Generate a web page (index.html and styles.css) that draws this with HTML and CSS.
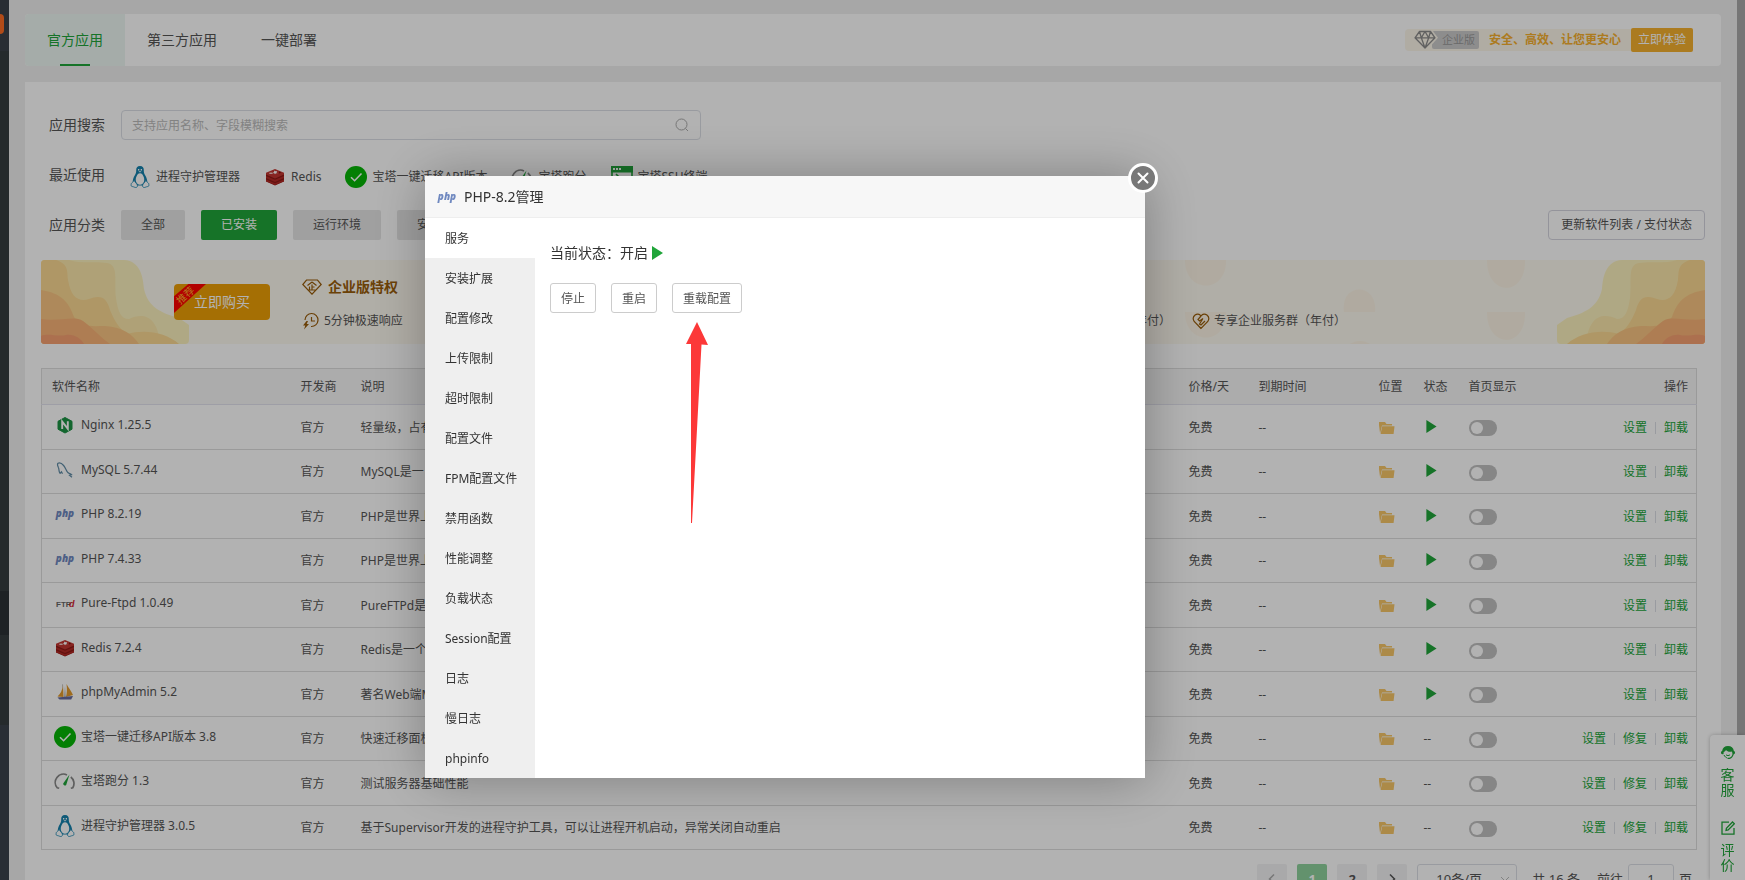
FILE: index.html
```html
<!DOCTYPE html>
<html lang="zh-CN">
<head>
<meta charset="utf-8">
<title>软件商店</title>
<link rel="stylesheet" href="styles.css">
</head>
<body>
<svg class="sprite" aria-hidden="true">
  <symbol id="i-tux" viewBox="0 0 22 22">
    <path fill="#1581ad" d="M11 0C8.200 0 7.100 1.800 7.200 4.200c.1 2.500-.4 3.200-1.500 5.200-1 1.700-1.800 3.900-2 6.100l3 4h8.600l3-4c-.2-2.200-1-4.400-2-6.100-1.100-2-1.600-2.700-1.500-5.200C14.900 1.800 13.800 0 11 0z"/>
    <path fill="#fff" d="M11 7.200c-1.700 0-2.600 1.200-3.400 3-.8 1.800-1.100 3.400-.6 5.400.5 2 2 3.200 4 3.200s3.500-1.200 4-3.200c.5-2 .2-3.600-.6-5.400-.8-1.800-1.700-3-3.400-3z"/>
    <path fill="#fff" stroke="#1581ad" stroke-width=".8" d="M5.200 14.600c-1 .3-1.200 1.800-2.600 2.600-.8.500-.3 1.300-.5 2.200-.2 1.300 2 1 3.700 1.900 1.300.6 2.700-.1 2.700-1.500 0-1.300-2-3.300-3.300-5.200zM16.800 14.600c1 .3 1.200 1.800 2.600 2.600.8.500.3 1.300.5 2.200.2 1.300-2 1-3.700 1.900-1.300.6-2.700-.1-2.700-1.500 0-1.300 2-3.300 3.300-5.200z"/>
    <path fill="#fff" d="M9 3h1.300v1.400H9zM11.700 3H13v1.400h-1.300zM9.500 5.200h3L11 6.400z"/>
  </symbol>
  <symbol id="i-redis" viewBox="0 0 22 22">
    <path fill="#8f1a16" d="M2 7l9 4.500L20 7v8.500l-9 4-9-4z"/>
    <path fill="#b52a26" d="M2 13.500l9 3.800 9-3.800v1.700l-9 3.900-9-3.900zM2 10l9 3.800L20 10v2l-9 3.900L2 12z"/>
    <path fill="#c23631" d="M11 3l9 3.700v1.900l-9 3.900-9-3.900V6.700z"/>
    <path fill="#fff" d="M10.500 4.400l1 .9 1.700-.2-.8 1.200 1.200.9-1.700.1-.9 1-.7-1.100-1.700-.1 1.200-.8z"/>
    <ellipse cx="7" cy="7.200" rx="2" ry=".8" fill="#f3d5d3"/>
    <path fill="#7a1410" d="M15 5.600l2.300 1-2.300 1z"/>
  </symbol>
  <symbol id="i-check" viewBox="0 0 22 22">
    <circle cx="11" cy="11" r="11" fill="#06b606"/>
    <path fill="none" stroke="#fff" stroke-width="1.600" d="M6 11.200l3.600 3.500L16.500 7.500"/>
  </symbol>
  <symbol id="i-gauge" viewBox="0 0 22 22">
    <path fill="none" stroke="#888" stroke-width="1.700" d="M5.200 18.300l-2-.5A8.300 8.300 0 0 1 13 4.900M16.800 7A8.300 8.300 0 0 1 18.800 17.800l-2 .5"/>
    <path fill="#20a53a" d="M15.500 4.500L12.200 15a1.800 1.800 0 0 1-3-1.600z"/>
  </symbol>
  <symbol id="i-term" viewBox="0 0 22 22">
    <rect x="1" y="1" width="20" height="20" fill="#fff" stroke="#20a53a" stroke-width="1.600"/>
    <path fill="#20a53a" d="M0 0h22v6.500H0z"/>
    <path fill="#fff" d="M2 2h2v2H2zM5 2h2v2H5zM8 2h2v2H8z"/>
    <path fill="none" stroke="#20a53a" stroke-width="1.500" d="M5 8l3 3-3 3"/>
  </symbol>
  <symbol id="i-nginx" viewBox="0 0 22 22">
    <path fill="#1c9344" stroke="#1c9344" stroke-linejoin="round" d="M11 3.500l7 3.800v7.900l-7 3.800-7-3.800V7.300z"/>
    <path fill="none" stroke="#fff" stroke-width="1.900" d="M8.200 15V7.600l5.600 7.200V7.300"/>
  </symbol>
  <symbol id="i-mysql" viewBox="0 0 22 22">
    <path fill="none" stroke="#5f8ba5" stroke-width="1.200" d="M6 14.500c-1.500-2-.6-4-1.600-6C3.600 6.800 3 5 4 4.200c2-.8 4 .4 5.600 2.300 2 2.400 2.600 5 4.200 7 1 1 2.600 1.200 3.700 2.200l-2 .6 2.500 2M6 14.500l1.500-1.700 1 2"/>
  </symbol>
  <symbol id="i-php" viewBox="0 0 22 22">
    <text class="logo-php" x="11" y="14" text-anchor="middle">php</text>
  </symbol>
  <symbol id="i-ftp" viewBox="0 0 22 22">
    <text class="logo-ftp" x="2" y="15">FTP</text><text class="logo-ftpd" x="15" y="15">d</text>
  </symbol>
  <symbol id="i-pma" viewBox="0 0 22 22">
    <path fill="#e29a2b" d="M9 3.500C8.500 9 6.500 13 3.500 15.500L9.500 16zM12.500 3c2 3.500 4.500 7 6.500 11l-7 2c1-4 1.200-8 .5-13z"/>
    <path fill="#bcbcbc" d="M8 3l1 .7-.5 5zM11 5l.8 11H10z"/>
    <path fill="#676a9c" d="M3.500 16.500l15.500-1.500-1.800 3.500H5.500z"/>
  </symbol>
  <symbol id="i-folder" viewBox="0 0 16 14">
    <path fill="#f6c667" d="M0 1h6l1.500 2H13v1.600H3L1.200 12H1L0 4z"/>
    <path fill="#f6c667" d="M3.200 5.300H15.500L14.600 13H1.600z"/>
  </symbol>
  <symbol id="i-play" viewBox="0 0 12 14"><path fill="#20a53a" d="M1 0l11 7-11 7z"/></symbol>
</svg>

<div class="app">
  <aside class="side">
    <div class="side-top"><span class="side-badge"></span></div>
    <div class="side-menu"></div>
    <div class="side-current"></div>
    <div class="side-menu-end"></div>
    <div class="side-bottom"></div>
  </aside>

  <main class="main">
    <header class="tabs">
      <nav class="tab-list">
        <a class="tab tab-on" href="#">官方应用</a>
        <a class="tab" href="#">第三方应用</a>
        <a class="tab" href="#">一键部署</a>
      </nav>
      <div class="promo">
        <svg class="promo-gem" viewBox="0 0 24 20" aria-hidden="true"><path fill="#fcf6ea" d="M4 0h14l6 7.800L13 20H11L0 7.800z"/><path fill="none" stroke="#8c8c8c" stroke-width="1.300" stroke-linejoin="round" d="M5.500 1.500h11L21 7.800 11 18 1 7.800zM1 7.800h20M5.500 1.500l1.800 6.300L11 18l3.700-10.200 1.800-6.300M7.300 7.800L11 1.500l3.700 6.300"/></svg>
        <span class="promo-tag">企业版</span>
        <strong class="promo-text">安全、高效、让您更安心</strong>
        <button class="promo-btn" type="button">立即体验</button>
      </div>
    </header>

    <section class="panel">
      <div class="filter">
        <label class="filter-label" for="q">应用搜索</label>
        <div class="search">
          <input class="search-input" id="q" type="text" placeholder="支持应用名称、字段模糊搜索">
          <svg class="search-icon" viewBox="0 0 14 14" aria-hidden="true"><circle cx="6.500" cy="6.500" r="5.500" fill="none" stroke="#aaa"/><path stroke="#aaa" d="M10.500 10.500L13 13"/></svg>
        </div>
      </div>
      <div class="filter">
        <span class="filter-label">最近使用</span>
        <div class="recent">
          <a class="recent-item" href="#"><svg class="ico"><use href="#i-tux"/></svg>进程守护管理器</a>
          <a class="recent-item" href="#"><svg class="ico"><use href="#i-redis"/></svg>Redis</a>
          <a class="recent-item" href="#"><svg class="ico"><use href="#i-check"/></svg>宝塔一键迁移API版本</a>
          <a class="recent-item" href="#"><svg class="ico"><use href="#i-gauge"/></svg>宝塔跑分</a>
          <a class="recent-item" href="#"><svg class="ico"><use href="#i-term"/></svg>宝塔SSH终端</a>
        </div>
      </div>
      <div class="filter">
        <span class="filter-label">应用分类</span>
        <div class="cats">
          <button class="cat" type="button">全部</button>
          <button class="cat cat-on" type="button">已安装</button>
          <button class="cat" type="button">运行环境</button>
          <button class="cat" type="button">安全</button>
        </div>
        <button class="refresh" type="button">更新软件列表 / 支付状态</button>
      </div>

      <div class="banner">
        <svg class="dots" viewBox="0 0 360 84" aria-hidden="true">
          <path d="M0 0h41c1 34-41 34-41 0zM159 52c-4-30 34-30 31 0zM302 0h38c1 37-38 37-38 0zM0 52h41c1 34-41 34-41 0zM302 52h38c1 37-38 37-38 0zM165 84c6-4 14-4 20 0z"/>
        </svg>
        <svg class="wave" viewBox="0 0 148 84" aria-hidden="true"><g id="waves">
          <path fill="#fbf1be" d="M0 0H83C100 1 102 18 103 29C107 47 120 53 138 58L148 65V80Q148 84 144 84H0z"/>
          <path fill="#fbe7ab" d="M0 0H28C40 4 55 1 66 3C78 5 73 20 75 38C77 52 80 59 88 59C96 55 106 54 112 62C118 70 118 77 118 84H0z"/>
          <path fill="#fbd892" d="M0 0H15C28 4 26 12 27 20C30 38 38 42 48 39C60 34 66 38 69 50C74 62 78 68 86 74C105 69 125 73 138 84H0z"/>
          <path fill="#fac583" d="M0 30C20 33 28 42 33 57C40 68 52 66 64 66C82 67 92 75 98 84H0z"/>
          <path fill="#f9b378" d="M0 59C18 62 33 55 42 61C54 70 59 77 69 84H0z"/>
          <path fill="#f6a172" d="M0 76C8 73 16 77 25 75C34 74 40 79 43 84H0z"/></g>
        </svg>
        <svg class="wave wave-right" viewBox="0 0 148 84" aria-hidden="true"><use href="#waves"/></svg>
        <button class="buy" type="button"><span class="buy-ribbon"><span class="buy-mark">推荐</span></span>立即购买</button>
        <div class="perks">
          <strong class="perks-title"><svg class="perks-logo" viewBox="0 0 20 16" aria-hidden="true"><path fill="none" stroke="#995d0b" stroke-width="1.200" d="M4.500 1h11L19.200 5.500 10 15.200.8 5.500zM10 3L5.500 6.500M10 3l4.500 3.500M10 5.500V11M10 8h2.500M7.500 7.500V11M6 11h8"/></svg>企业版特权</strong>
          <ul class="perk-list">
            <li class="perk perk-first"><svg class="perk-icon" viewBox="0 0 18 18" aria-hidden="true"><path fill="none" stroke="#995d0b" stroke-width="1.200" d="M3 8a6.500 6.500 0 1 1 6 6.500M9.500 5v4h3.500"/><path fill="#995d0b" d="M4.500 9L1 13.500h2.300L2 17.500l5-5.500H4.700L6 9z"/></svg>5分钟极速响应</li>
            <li class="perk perk-last">（年付）</li>
            <li class="perk"><svg class="perk-icon" viewBox="0 0 18 18" aria-hidden="true"><path fill="none" stroke="#995d0b" stroke-width="1.200" d="M9 16.500L2.200 9.500C-1 4.500 5.500-.8 9 4c3.500-4.800 10 .5 6.800 5.500zM9 4L6 7.500 7.500 9 11 6.500M11 6.500L7.500 12l1.500 1 4-4"/></svg>专享企业服务群（年付）</li>
          </ul>
        </div>
      </div>

      <table class="grid">
        <colgroup><col class="c-name"><col class="c-vendor"><col><col class="c-price"><col class="c-expire"><col class="c-icon"><col class="c-icon"><col class="c-show"><col class="c-ops"></colgroup>
        <thead><tr><th>软件名称</th><th>开发商</th><th>说明</th><th>价格/天</th><th>到期时间</th><th>位置</th><th>状态</th><th>首页显示</th><th class="right">操作</th></tr></thead>
        <tbody>
          <tr><td><div class="soft"><svg class="ico"><use href="#i-nginx"/></svg>Nginx 1.25.5</div></td><td>官方</td><td>轻量级，占有</td><td>免费</td><td>--</td><td><svg class="folder"><use href="#i-folder"/></svg></td><td><svg class="play"><use href="#i-play"/></svg></td><td><input class="switch" type="checkbox" aria-label="首页显示 Nginx"></td><td><div class="ops"><a href="#">设置</a><a href="#">卸载</a></div></td></tr>
          <tr><td><div class="soft"><svg class="ico"><use href="#i-mysql"/></svg>MySQL 5.7.44</div></td><td>官方</td><td>MySQL是一</td><td>免费</td><td>--</td><td><svg class="folder"><use href="#i-folder"/></svg></td><td><svg class="play"><use href="#i-play"/></svg></td><td><input class="switch" type="checkbox" aria-label="首页显示 MySQL"></td><td><div class="ops"><a href="#">设置</a><a href="#">卸载</a></div></td></tr>
          <tr><td><div class="soft"><svg class="ico"><use href="#i-php"/></svg>PHP 8.2.19</div></td><td>官方</td><td>PHP是世界上</td><td>免费</td><td>--</td><td><svg class="folder"><use href="#i-folder"/></svg></td><td><svg class="play"><use href="#i-play"/></svg></td><td><input class="switch" type="checkbox" aria-label="首页显示 PHP 8.2"></td><td><div class="ops"><a href="#">设置</a><a href="#">卸载</a></div></td></tr>
          <tr><td><div class="soft"><svg class="ico"><use href="#i-php"/></svg>PHP 7.4.33</div></td><td>官方</td><td>PHP是世界上</td><td>免费</td><td>--</td><td><svg class="folder"><use href="#i-folder"/></svg></td><td><svg class="play"><use href="#i-play"/></svg></td><td><input class="switch" type="checkbox" aria-label="首页显示 PHP 7.4"></td><td><div class="ops"><a href="#">设置</a><a href="#">卸载</a></div></td></tr>
          <tr><td><div class="soft"><svg class="ico"><use href="#i-ftp"/></svg>Pure-Ftpd 1.0.49</div></td><td>官方</td><td>PureFTPd是</td><td>免费</td><td>--</td><td><svg class="folder"><use href="#i-folder"/></svg></td><td><svg class="play"><use href="#i-play"/></svg></td><td><input class="switch" type="checkbox" aria-label="首页显示 Pure-Ftpd"></td><td><div class="ops"><a href="#">设置</a><a href="#">卸载</a></div></td></tr>
          <tr><td><div class="soft"><svg class="ico"><use href="#i-redis"/></svg>Redis 7.2.4</div></td><td>官方</td><td>Redis是一个</td><td>免费</td><td>--</td><td><svg class="folder"><use href="#i-folder"/></svg></td><td><svg class="play"><use href="#i-play"/></svg></td><td><input class="switch" type="checkbox" aria-label="首页显示 Redis"></td><td><div class="ops"><a href="#">设置</a><a href="#">卸载</a></div></td></tr>
          <tr><td><div class="soft"><svg class="ico"><use href="#i-pma"/></svg>phpMyAdmin 5.2</div></td><td>官方</td><td>著名Web端M</td><td>免费</td><td>--</td><td><svg class="folder"><use href="#i-folder"/></svg></td><td><svg class="play"><use href="#i-play"/></svg></td><td><input class="switch" type="checkbox" aria-label="首页显示 phpMyAdmin"></td><td><div class="ops"><a href="#">设置</a><a href="#">卸载</a></div></td></tr>
          <tr><td><div class="soft"><svg class="ico"><use href="#i-check"/></svg>宝塔一键迁移API版本 3.8</div></td><td>官方</td><td>快速迁移面板</td><td>免费</td><td>--</td><td><svg class="folder"><use href="#i-folder"/></svg></td><td>--</td><td><input class="switch" type="checkbox" aria-label="首页显示 宝塔一键迁移"></td><td><div class="ops"><a href="#">设置</a><a href="#">修复</a><a href="#">卸载</a></div></td></tr>
          <tr><td><div class="soft"><svg class="ico"><use href="#i-gauge"/></svg>宝塔跑分 1.3</div></td><td>官方</td><td>测试服务器基础性能</td><td>免费</td><td>--</td><td><svg class="folder"><use href="#i-folder"/></svg></td><td>--</td><td><input class="switch" type="checkbox" aria-label="首页显示 宝塔跑分"></td><td><div class="ops"><a href="#">设置</a><a href="#">修复</a><a href="#">卸载</a></div></td></tr>
          <tr><td><div class="soft"><svg class="ico"><use href="#i-tux"/></svg>进程守护管理器 3.0.5</div></td><td>官方</td><td>基于Supervisor开发的进程守护工具，可以让进程开机启动，异常关闭自动重启</td><td>免费</td><td>--</td><td><svg class="folder"><use href="#i-folder"/></svg></td><td>--</td><td><input class="switch" type="checkbox" aria-label="首页显示 进程守护管理器"></td><td><div class="ops"><a href="#">设置</a><a href="#">修复</a><a href="#">卸载</a></div></td></tr>
        </tbody>
      </table>

      <div class="pager">
        <button class="page page-off" type="button" aria-label="上一页"><svg class="chev" viewBox="0 0 12 12"><path d="M8 1.500L3.500 6 8 10.500"/></svg></button>
        <button class="page page-on" type="button">1</button>
        <button class="page" type="button">2</button>
        <button class="page" type="button" aria-label="下一页"><svg class="chev" viewBox="0 0 12 12"><path d="M4 1.500L8.500 6 4 10.500"/></svg></button>
        <div class="size"><select class="size-select" aria-label="每页条数"><option>10条/页</option></select><svg class="size-arrow" viewBox="0 0 12 12" aria-hidden="true"><path d="M2 4l4 4 4-4"/></svg></div>
        <span class="total">共 16 条</span>
        <label class="jump">前往<input class="jump-input" type="text" value="1">页</label>
      </div>
    </section>
  </main>
</div>

<div class="scroll"></div>
<div class="float">
  <a class="float-item" href="#"><svg class="float-icon" viewBox="0 0 14 14" aria-hidden="true"><path fill="#20a53a" d="M7 0a6 6 0 0 1 5.900 4.900c.7.200 1.100.8 1.100 1.700s-.5 1.600-1.200 1.700C12 11 10.500 12.500 8.500 13H6.500v-1.200h1.800C10 11.300 11.300 10 11.500 8L11 5.500C8.500 6.200 6 5.500 5 4 4.500 5 3.500 5.600 2.700 6L2.500 8.300H1.300C.4 8.200 0 7.500 0 6.600s.4-1.500 1.100-1.700A6 6 0 0 1 7 0z"/><path fill="none" stroke="#20a53a" d="M3 9c1 2 2 2.500 3 2.800M5 8.800c1.300 1 2.700 1 4 0"/></svg>客服</a>
  <a class="float-item" href="#"><svg class="float-icon" viewBox="0 0 14 14" aria-hidden="true"><path fill="none" stroke="#20a53a" stroke-width="1.300" d="M8 1.200H1v12h12V7M5 9.500l.4-2.300L11.500 1l1.800 1.800L7.200 9z"/></svg>评价</a>
</div>

<div class="shade"></div>
<div class="dialog" role="dialog" aria-labelledby="dlg-title">
  <div class="dlg-head"><svg class="ico"><use href="#i-php"/></svg><h2 class="dlg-title" id="dlg-title">PHP-8.2管理</h2></div>
  <div class="dlg-body">
    <nav class="dlg-nav">
      <a class="dlg-link dlg-link-on" href="#">服务</a>
      <a class="dlg-link" href="#">安装扩展</a>
      <a class="dlg-link" href="#">配置修改</a>
      <a class="dlg-link" href="#">上传限制</a>
      <a class="dlg-link" href="#">超时限制</a>
      <a class="dlg-link" href="#">配置文件</a>
      <a class="dlg-link" href="#">FPM配置文件</a>
      <a class="dlg-link" href="#">禁用函数</a>
      <a class="dlg-link" href="#">性能调整</a>
      <a class="dlg-link" href="#">负载状态</a>
      <a class="dlg-link" href="#">Session配置</a>
      <a class="dlg-link" href="#">日志</a>
      <a class="dlg-link" href="#">慢日志</a>
      <a class="dlg-link" href="#">phpinfo</a>
    </nav>
    <div class="dlg-main">
      <p class="status">当前状态：开启<svg class="status-play"><use href="#i-play"/></svg></p>
      <div class="actions">
        <button class="act" type="button">停止</button>
        <button class="act" type="button">重启</button>
        <button class="act" type="button">重载配置</button>
      </div>
      <svg class="arrow" viewBox="0 0 24 202" aria-hidden="true"><path fill="#fc3838" d="M12 0l11 23-6.500-.5L7 201H6V22L1 22z"/></svg>
    </div>
  </div>
  <button class="dlg-close" type="button" aria-label="关闭"><svg class="dlg-x" viewBox="0 0 12 12"><path d="M1.500 1.500l9 9M10.500 1.500l-9 9"/></svg></button>
</div>
</body>
</html>
```
FILE: styles.css
```css
* { box-sizing: border-box; }
html, body { height: 100%; }
body {
  margin: 0;
  overflow: hidden;
  background: #f0f0f0;
  color: #555;
  font: 12px/18px "Noto Sans", "Noto Sans CJK SC", sans-serif;
}
a { color: inherit; text-decoration: none; }
button, input, select { font: inherit; color: inherit; margin: 0; }
button { padding: 0; border: 0; cursor: pointer; }
.sprite { position: absolute; width: 0; height: 0; }
.ico { width: 22px; height: 22px; flex: none; }
.logo-php { font: italic 800 10px "Open Sans", sans-serif; fill: #7089c0; }
.logo-ftp { font: 700 8px "Liberation Sans", sans-serif; fill: #666; }
.logo-ftpd { font: italic 700 9px "Liberation Sans", sans-serif; fill: #d0232f; }

.app { display: flex; height: 100%; isolation: isolate; }
.side { display: flex; flex-direction: column; width: 9px; flex: none; background: #363d40; }
.side-top { height: 51px; padding-top: 14px; background: #3c4149; }
.side-badge { display: block; width: 4px; height: 20px; border-radius: 0 4px 4px 0; background: #ff6c23; }
.side-menu { height: 540px; }
.side-current { height: 44px; background: #2c3136; }
.side-menu-end { height: 90px; }
.side-bottom { flex: 1; background: #3c424d; }

.main { flex: 1; min-width: 0; padding: 14px 24px 0 16px; }
.tabs { display: flex; justify-content: space-between; align-items: center; height: 52px; padding-right: 28px; border-radius: 4px; background: #fff; }
.tab-list { display: flex; align-self: stretch; }
.tab { position: relative; padding: 0 22px; font-size: 14px; line-height: 52px; }
.tab-on { color: #20a53a; background: #edf7f2; border-radius: 4px 0 0 4px; }
.tab-on::after { content: ""; position: absolute; left: 35px; right: 35px; bottom: 0; height: 2px; background: #20a53a; }

.promo { display: flex; align-items: center; height: 22px; padding-left: 9px; border-radius: 4px; background: #fcf6ea; }
.promo-gem { width: 24px; height: 20px; margin-right: -6px; z-index: 1; }
.promo-tag { height: 18px; padding: 0 4px 0 10px; border-radius: 2px; background: #cbcbcb; color: #999; font-size: 11px; }
.promo-text { margin: 0 10px; color: #f7b02e; }
.promo-btn { height: 24px; padding: 0 7px; border-radius: 2px; background: #f5b02e; color: #fff; }

.panel { margin-top: 16px; padding: 28px 16px 40px; background: #fff; }
.filter { display: flex; align-items: center; height: 30px; margin-bottom: 20px; padding-left: 8px; }
.filter-label { width: 72px; flex: none; font-size: 14px; }
.search { position: relative; width: 580px; }
.search-input { display: block; width: 100%; height: 30px; padding: 0 32px 0 10px; border: 1px solid #dcdfe6; border-radius: 4px; background: #fff; outline: 0; }
.search-input::placeholder { color: #bbb; opacity: 1; }
.search-icon { position: absolute; right: 12px; top: 8px; width: 14px; height: 14px; }
.recent { display: flex; gap: 24px; padding: 4px 0 0 8px; }
.recent-item { display: flex; align-items: center; gap: 5px; white-space: nowrap; }
.cats { display: flex; gap: 16px; flex: 1; }
.cat { height: 30px; padding: 0 20px; border-radius: 2px; background: #e5e5e5; }
.cat-on { background: #20a53a; color: #fff; }
.refresh { height: 30px; padding: 0 12px; border: 1px solid #d5d5df; border-radius: 4px; background: #fff; }

.banner { position: relative; display: flex; height: 84px; padding-left: 133px; border-radius: 4px; overflow: hidden; background: #fdf9ef; }
.wave { position: absolute; left: 0; top: 0; width: 148px; height: 84px; }
.wave-right { left: auto; right: 0; transform: scaleX(-1); }
.dots { position: absolute; right: 160px; top: 0; width: 360px; height: 84px; fill: #fcf4e5; }
.buy { position: relative; width: 96px; height: 36px; margin-top: 24px; flex: none; overflow: hidden; border-radius: 4px; background: #ed9f07; color: #fff; font-size: 14px; }
.buy-ribbon { position: absolute; left: 0; top: 0; width: 32px; height: 29px; background: #f00; clip-path: polygon(45% 0, 100% 0, 0 100%, 0 42%); }
.buy-mark { position: absolute; left: 0; top: 3px; width: 22px; color: #ffb52e; font-size: 10px; line-height: 16px; transform: rotate(-42deg); }
.perks { position: relative; flex: 1; margin-left: 32px; padding-top: 18px; }
.perks-title { display: flex; align-items: center; gap: 6px; color: #995d0b; font-size: 14px; }
.perks-logo { width: 20px; height: 16px; }
.perk-list { display: flex; margin: 16px 0 0; padding: 0; list-style: none; white-space: nowrap; }
.perk { display: flex; align-items: center; gap: 4px; }
.perk-icon { width: 18px; height: 18px; }
.perk-first { width: 720px; }
.perk-last { justify-content: flex-end; width: 149px; margin-right: 21px; }

.grid { width: calc(100% - 8px); margin-top: 24px; table-layout: fixed; border-collapse: collapse; border: 1px solid #ddd; }
.c-name { width: 249px; }
.c-vendor { width: 60px; }
.c-price { width: 70px; }
.c-expire { width: 120px; }
.c-icon { width: 45px; }
.c-show { width: 100px; }
.c-ops { width: 138px; }
.grid th, .grid td { padding: 0 8px 0 10px; border-bottom: 1px solid #ddd; text-align: left; font-weight: 400; white-space: nowrap; }
.grid th { height: 36px; background: #f6f6f6; border-bottom-color: #e3e3ee; }
.grid th.right { text-align: right; }
.grid td { height: 45px; padding-top: 1px; }
.grid tr:nth-child(even) td { height: 44px; }
.soft { display: flex; align-items: center; gap: 5px; padding: 0 0 5px 2px; }
.folder { display: block; width: 16px; height: 14px; }
.play { display: block; width: 12px; height: 13px; margin: 0 0 3px 1px; }
.switch { display: block; appearance: none; width: 28px; height: 16px; margin: 1px 0 0; padding: 2px; border-radius: 8px; background: #c0c0c0; }
.switch::before { content: ""; display: block; width: 12px; height: 12px; border-radius: 50%; background: #fff; }
.ops { display: flex; justify-content: flex-end; align-items: center; color: #20a53a; }
.ops a + a::before { content: ""; display: inline-block; width: 1px; height: 12px; margin: 0 8px; vertical-align: -2px; background: #dcdfe6; }

.pager { display: flex; justify-content: flex-end; align-items: center; gap: 10px; margin: 14px 13px 0 0; font-size: 13px; }
.page { display: grid; place-items: center; width: 30px; height: 30px; border-radius: 2px; background: #f2f2f4; font-weight: 700; }
.page-on { background: #8fd29c; color: #fff; }
.page-off { color: #aaa; }
.chev { width: 12px; height: 12px; fill: none; stroke: currentColor; stroke-width: 1.500; }
.size { position: relative; }
.size-select { appearance: none; width: 100px; height: 30px; padding: 0 0 0 18px; border: 1px solid #dcdfe6; border-radius: 3px; background: #fff; }
.size-arrow { position: absolute; right: 6px; top: 9px; width: 12px; height: 12px; fill: none; stroke: #bbb; }
.total { margin: 0 7px 0 5px; }
.jump { display: flex; align-items: center; gap: 5px; }
.jump-input { width: 46px; height: 30px; padding: 0; border: 1px solid #dcdfe6; border-radius: 3px; background: #fff; text-align: center; }

.scroll { position: fixed; top: 0; right: 0; width: 8px; height: 742px; background: #aaa; }
.float { position: fixed; top: 735px; right: 0; bottom: 0; width: 35px; padding-top: 11px; border-radius: 4px 0 0 0; background: #fff; box-shadow: 0 0 4px rgba(0, 0, 0, .25); color: #20a53a; font-size: 14px; line-height: 15px; }
.float-item { display: flex; flex-direction: column; align-items: center; width: 14px; margin: 0 auto 24px; word-break: break-all; }
.float-icon { width: 14px; height: 14px; margin-bottom: 7px; }

.shade { position: fixed; inset: 0; background: rgba(0, 0, 0, .3); }
.dialog { position: fixed; left: 425px; top: 176px; width: 720px; background: #fff; color: #333; box-shadow: 1px 1px 50px rgba(0, 0, 0, .3); }
.dlg-head { display: flex; align-items: center; gap: 6px; height: 42px; padding-left: 11px; background: #f7f7f7; border-bottom: 1px solid #eee; }
.dlg-title { margin: 0; font-size: 14px; font-weight: 400; }
.dlg-body { display: flex; }
.dlg-nav { width: 110px; flex: none; background: #efefef; }
.dlg-link { display: block; height: 40px; padding: 2px 0 0 20px; line-height: 38px; }
.dlg-link-on { background: #fff; }
.dlg-main { flex: 1; padding: 25px 15px 0; }
.status { display: flex; align-items: center; gap: 3px; margin: 0 0 20px; font-size: 14px; line-height: 20px; }
.status-play { width: 12px; height: 14px; }
.actions { display: flex; gap: 15px; }
.act { height: 30px; padding: 1px 10px 0; border: 1px solid #ccc; border-radius: 3px; background: #fff; color: #555; }
.arrow { display: block; width: 24px; height: 202px; margin: 9px 0 0 135px; }
.dlg-close { position: absolute; top: -13px; right: -13px; display: grid; place-items: center; width: 30px; height: 30px; border: 3px solid #fff; border-radius: 50%; background: #787878; }
.dlg-x { width: 12px; height: 12px; fill: none; stroke: #fff; stroke-width: 2; stroke-linecap: round; }
```
